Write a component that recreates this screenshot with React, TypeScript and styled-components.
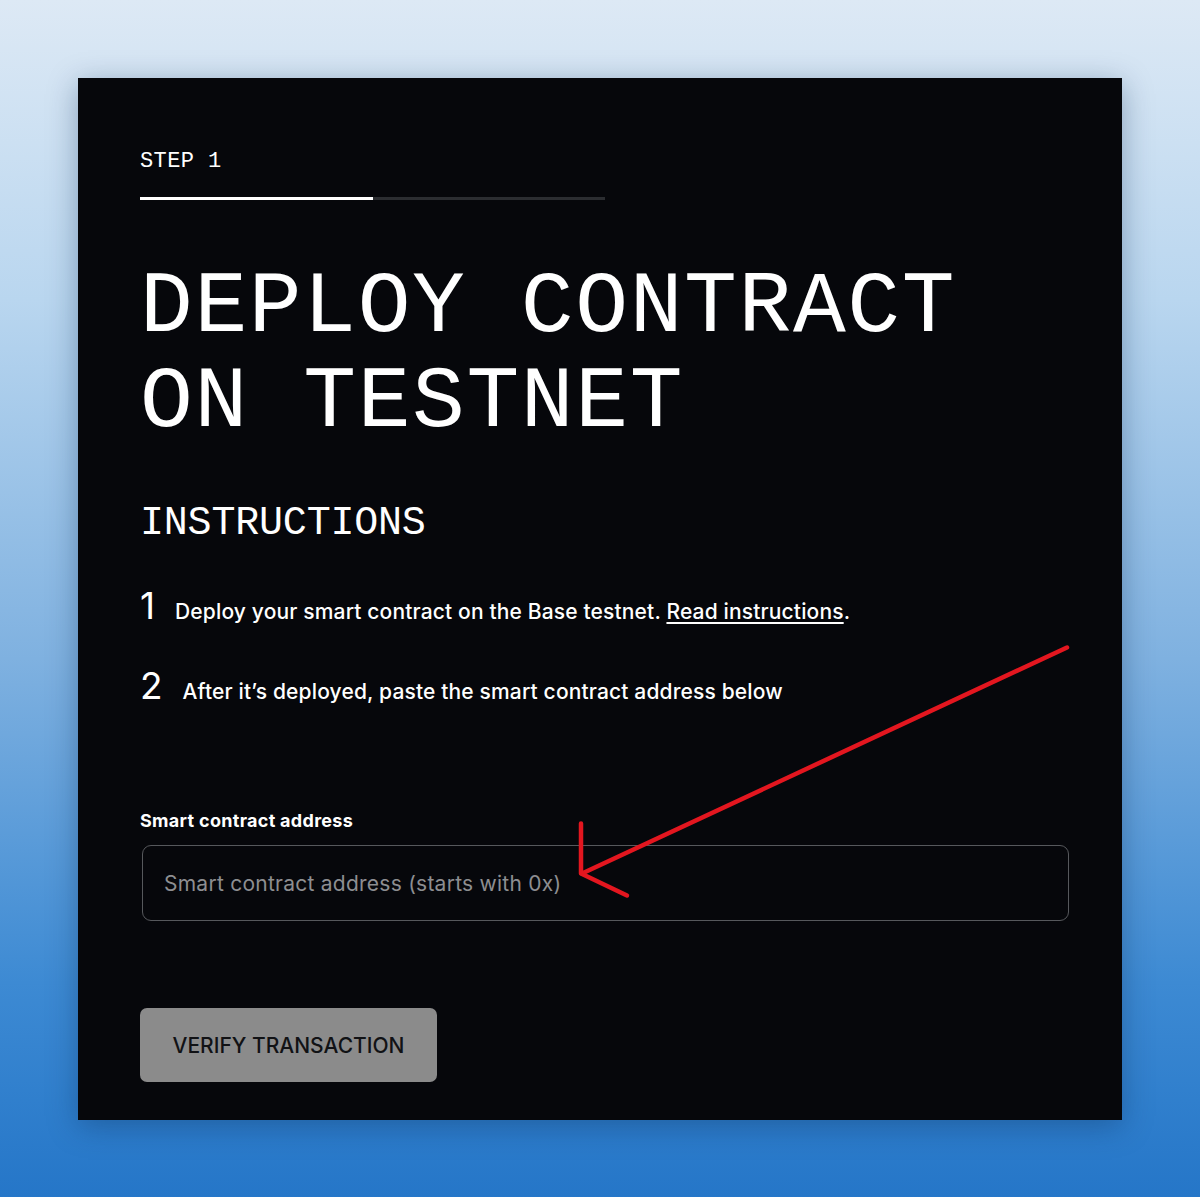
import React from "react";
import styled, { createGlobalStyle } from "styled-components";

const GlobalStyle = createGlobalStyle`
  html, body {
    margin: 0;
    padding: 0;
  }
  body {
    min-height: 1197px;
    background: linear-gradient(180deg, #dde9f5 0%, #b9d6ef 25%, #7fb1e0 55%, #3d8ad3 82%, #2576c8 100%);
    font-family: Inter, "Liberation Sans", sans-serif;
  }
`;

const Page = styled.main`
  padding: 78px 78px 78px;
`;

const Card = styled.section`
  position: relative;
  background: #06070b;
  color: #ffffff;
  padding: 70px 62px 38px;
  box-shadow: 0 6px 28px rgba(10, 40, 80, 0.35);
`;

const StepLabel = styled.div`
  font-family: "Liberation Mono", monospace;
  font-size: 22px;
  line-height: 27px;
  letter-spacing: 0.4px;
`;

const Progress = styled.div`
  margin-top: 22px;
  width: 465px;
  height: 3px;
  background: #2b2d31;
  display: flex;
`;

const ProgressFill = styled.div<{ $value: number }>`
  width: ${(p) => p.$value * 100}%;
  background: #ffffff;
`;

const Heading = styled.h1`
  margin: 60px 0 0;
  font-family: "Liberation Mono", monospace;
  font-weight: 400;
  font-size: 88px;
  line-height: 95px;
  letter-spacing: 1.6px;
`;

const SubHeading = styled.h2`
  margin: 50px 0 0;
  font-family: "Liberation Mono", monospace;
  font-weight: 400;
  font-size: 40px;
  line-height: 48px;
  letter-spacing: -0.2px;
`;

const Steps = styled.ol`
  list-style: none;
  margin: 35px 0 0;
  padding: 0;
  display: flex;
  flex-direction: column;
  gap: 34px;
`;

const StepRow = styled.li`
  display: flex;
  align-items: baseline;
  gap: 20px;
  height: 46px;
`;

const StepNumber = styled.span`
  font-size: 37px;
  font-weight: 400;
  line-height: 46px;
`;

const StepText = styled.span`
  font-size: 21px;
  font-weight: 500;
  letter-spacing: 0.15px;
`;

const Link = styled.a`
  color: #ffffff;
  text-decoration: underline;
  text-underline-offset: 3px;
`;

const Field = styled.div`
  margin-top: 101px;
  display: flex;
  flex-direction: column;
  gap: 14px;
`;

const Label = styled.label`
  font-size: 18px;
  font-weight: 700;
  letter-spacing: 0.3px;
`;

const Input = styled.input`
  box-sizing: border-box;
  width: 927px;
  height: 76px;
  margin-left: 2px;
  padding: 0 21px;
  background: transparent;
  border: 1px solid #56585c;
  border-radius: 9px;
  color: #fff;
  font-family: Inter, "Liberation Sans", sans-serif;
  font-size: 21px;
  letter-spacing: 0.25px;
  &::placeholder {
    color: #8d8e91;
  }
`;

const Button = styled.button`
  margin-top: 87px;
  width: 297px;
  height: 74px;
  border: none;
  border-radius: 7px;
  background: #8b8b8b;
  color: #111215;
  font-family: Inter, "Liberation Sans", sans-serif;
  font-size: 21px;
  font-weight: 500;
  letter-spacing: 0;
`;

const Annotation = styled.svg`
  position: absolute;
  left: 0;
  top: 0;
  width: 100%;
  height: 100%;
  pointer-events: none;
`;

export default function App() {
  return (
    <>
      <GlobalStyle />
      <Page>
        <Card>
          <StepLabel>STEP 1</StepLabel>
          <Progress>
            <ProgressFill $value={0.5} />
          </Progress>
          <Heading>
            DEPLOY CONTRACT
            <br />
            ON TESTNET
          </Heading>
          <SubHeading>INSTRUCTIONS</SubHeading>
          <Steps>
            <StepRow>
              <StepNumber>1</StepNumber>
              <StepText>
                Deploy your smart contract on the Base testnet.{" "}
                <Link href="#">Read instructions</Link>.
              </StepText>
            </StepRow>
            <StepRow>
              <StepNumber>2</StepNumber>
              <StepText>After it’s deployed, paste the smart contract address below</StepText>
            </StepRow>
          </Steps>
          <Field>
            <Label htmlFor="address">Smart contract address</Label>
            <Input id="address" placeholder="Smart contract address (starts with 0x)" />
          </Field>
          <Button>VERIFY TRANSACTION</Button>
          {/* red hand-drawn arrow pointing at the input */}
          <Annotation viewBox="0 0 1044 1041">
            <g fill="none" stroke="#e3161f" strokeWidth="4.5" strokeLinecap="round" strokeLinejoin="round">
              <path d="M989 569 L504 795" />
              <path d="M503 745 L503 795 L549 817" />
            </g>
          </Annotation>
        </Card>
      </Page>
    </>
  );
}
